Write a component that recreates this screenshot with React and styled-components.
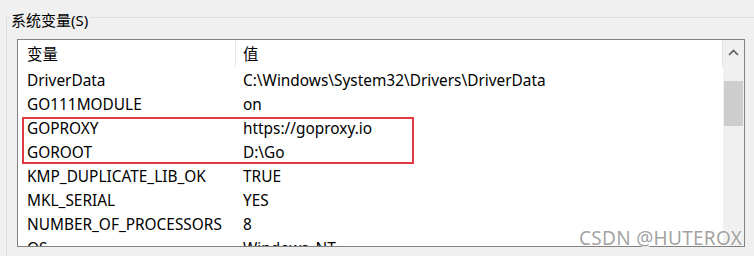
import styled, { createGlobalStyle } from "styled-components";

const GlobalStyle = createGlobalStyle`
  html, body {
    margin: 0;
    padding: 0;
    background: #f0f0f0;
  }
  body {
    font-family: "Noto Sans", "Noto Sans CJK SC", sans-serif;
    color: #000;
  }
`;

const Page = styled.div`
  position: relative;
  width: 754px;
  height: 256px;
  overflow: hidden;
  background: #f0f0f0;
`;

const Group = styled.div`
  margin: 17px 0 0 6px;
  border-top: 1px solid #dcdcdc;
  border-left: 1px solid #dcdcdc;
  height: 300px;
`;

const Legend = styled.div`
  display: block;
  width: fit-content;
  margin: -7px 0 0 3px;
  padding: 0 2px 0 1px;
  height: 18px;
  line-height: 18px;
  font-size: 15px;
  background: #f0f0f0;
`;

const ListBox = styled.div`
  box-sizing: border-box;
  display: flex;
  width: 728px;
  height: 208px;
  margin: 10px 0 0 10px;
  border: 1px solid #828282;
  background: #fff;
`;

const Table = styled.div`
  flex: 1;
  overflow: hidden;
`;

const Row = styled.div`
  display: grid;
  grid-template-columns: 217px 1fr;
  height: ${(p) => (p.$head ? "27px" : "24px")};
  font-size: 15.4px;
  line-height: 24px;
  align-items: center;
  white-space: nowrap;
`;

const Cell = styled.div`
  box-sizing: border-box;
  padding-left: ${(p) => (p.$first ? "8px" : "7px")};
  padding-top: 2px;
  border-left: ${(p) => (p.$divider ? "1px solid #e5e5e5" : "1px solid transparent")};
  height: 100%;
  display: flex;
  align-items: center;
`;

const HeadRow = styled(Row)`
  border-right: 1px solid #e5e5e5;
`;

const Highlight = styled.div`
  position: relative;

  &::after {
    content: "";
    position: absolute;
    left: 4px;
    top: 2px;
    width: 392px;
    height: 47px;
    box-sizing: border-box;
    border: 2px solid #e2393f;
    pointer-events: none;
  }
`;

const ScrollBar = styled.div`
  width: 21px;
  background: #f0f0f0;
  display: flex;
  flex-direction: column;
  align-items: center;
`;

const ArrowButton = styled.div`
  height: 25px;
  width: 100%;
  display: flex;
  align-items: center;
  justify-content: center;
`;

const Thumb = styled.div`
  margin-top: 16px;
  width: 19px;
  height: 45px;
  background: #cdcdcd;
`;

const Watermark = styled.div`
  position: absolute;
  left: 579px;
  top: 225px;
  font-family: "Noto Sans", "Noto Sans CJK SC", sans-serif;
  font-size: 19px;
  letter-spacing: 0.3px;
  color: rgba(120, 120, 120, 0.7);
  text-shadow: 0 0 1px #fff, 1px 1px 0 rgba(255, 255, 255, 0.8);
  white-space: nowrap;
`;

const rows = [
  ["DriverData", "C:\\Windows\\System32\\Drivers\\DriverData"],
  ["GO111MODULE", "on"],
];

const marked = [
  ["GOPROXY", "https://goproxy.io"],
  ["GOROOT", "D:\\Go"],
];

const rest = [
  ["KMP_DUPLICATE_LIB_OK", "TRUE"],
  ["MKL_SERIAL", "YES"],
  ["NUMBER_OF_PROCESSORS", "8"],
  ["OS", "Windows_NT"],
];

const VarRow = ({ name, value }) => (
  <Row>
    <Cell $first>{name}</Cell>
    <Cell>{value}</Cell>
  </Row>
);

const App = () => {
  return (
    <Page>
      <GlobalStyle />
      <Group>
        <Legend>系统变量(S)</Legend>
        <ListBox>
          <Table>
            <HeadRow $head>
              <Cell $first>变量</Cell>
              <Cell $divider>值</Cell>
            </HeadRow>
            {rows.map(([n, v]) => (
              <VarRow key={n} name={n} value={v} />
            ))}
            <Highlight>
              {marked.map(([n, v]) => (
                <VarRow key={n} name={n} value={v} />
              ))}
            </Highlight>
            {rest.map(([n, v]) => (
              <VarRow key={n} name={n} value={v} />
            ))}
          </Table>
          <ScrollBar>
            <ArrowButton>
              <svg width="11" height="7" viewBox="0 0 11 7">
                <path d="M1 6 L5.5 1.5 L10 6" fill="none" stroke="#606060" strokeWidth="1.6" />
              </svg>
            </ArrowButton>
            <Thumb />
          </ScrollBar>
        </ListBox>
      </Group>
      <Watermark>CSDN @HUTEROX</Watermark>
    </Page>
  );
};

export default App;
